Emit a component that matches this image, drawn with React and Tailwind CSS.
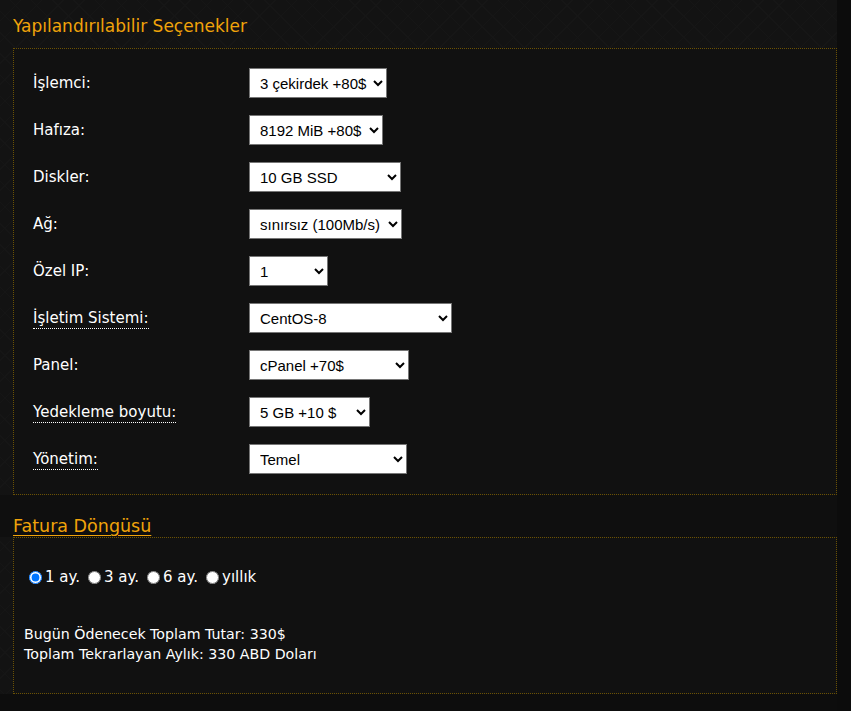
import React from "react";

const rows = [
  { label: "İşlemci:", value: "3 çekirdek +80$", w: "w-[138px]" },
  { label: "Hafıza:", value: "8192 MiB +80$", w: "w-[134px]" },
  { label: "Diskler:", value: "10 GB SSD", w: "w-[152px]" },
  { label: "Ağ:", value: "sınırsız (100Mb/s)", w: "w-[153px]" },
  { label: "Özel IP:", value: "1", w: "w-[79px]" },
  { label: "İşletim Sistemi:", value: "CentOS-8", w: "w-[203px]", abbr: true },
  { label: "Panel:", value: "cPanel +70$", w: "w-[160px]" },
  { label: "Yedekleme boyutu:", value: "5 GB +10 $", w: "w-[121px]", abbr: true },
  { label: "Yönetim:", value: "Temel", w: "w-[158px]", abbr: true },
];

const font = "font-['DejaVu_Sans',sans-serif]";

export default function App() {
  return (
    <div className="min-h-[711px] w-[851px] bg-[#0c0c0c] flex">
      <div
        className={`w-[837px] bg-[#131313] ${font} bg-[repeating-linear-gradient(45deg,#161616_0px,#161616_1px,transparent_1px,transparent_15px),repeating-linear-gradient(-45deg,#161616_0px,#161616_1px,transparent_1px,transparent_15px)]`}
      >
        <div className="pl-[13px] pt-[14px]">
          <h2 className="text-[17px] leading-[24px] text-[#f0a30a]">Yapılandırılabilir Seçenekler</h2>
          <div className="mt-[10px] h-[447px] border border-dotted border-[#6b5204] bg-[#111111] pl-[19px] pt-[19px]">
            <div className="flex flex-col gap-[17px]">
              {rows.map((r) => (
                <div key={r.label} className="flex items-center h-[30px]">
                  <div className="w-[216px] text-[15px] text-white">
                    {r.abbr ? (
                      <span className="border-b border-dotted border-white pb-[1px]">{r.label}</span>
                    ) : (
                      r.label
                    )}
                  </div>
                  <select
                    defaultValue={r.value}
                    className={`${r.w} h-[30px] bg-white text-black border border-[#767676] pl-[6px] text-[15px] font-['Liberation_Sans',Arial,sans-serif]`}
                  >
                    <option value={r.value}>{r.value}</option>
                  </select>
                </div>
              ))}
            </div>
          </div>
          <div className="h-[42px] bg-[#0f0f0f] -ml-[13px] pl-[13px] flex items-end">
            <h2 className="text-[17.5px] leading-[24px] text-[#f0a30a] underline underline-offset-[3px] mb-[-1px]">Fatura Döngüsü</h2>
          </div>
          <div className="h-[157px] border border-dotted border-[#6b5204] bg-[#111111] pl-[14px] pt-[31px] text-white">
            <div className="flex items-center text-[15px] pl-[1px] leading-[16px]">
              {["1 ay.", "3 ay.", "6 ay.", "yıllık"].map((t, i) => (
                <label key={t} className="flex items-center mr-[8px]">
                  <input type="radio" name="cycle" defaultChecked={i === 0} className="w-[13px] h-[13px] m-0 mr-[3px] accent-[#0075ff]" />
                  <span>{t}</span>
                </label>
              ))}
            </div>
            <div className="mt-[39px] -ml-[4px] text-[14.2px] leading-[20px]">
              <div>Bugün Ödenecek Toplam Tutar: 330$</div>
              <div>Toplam Tekrarlayan Aylık: 330 ABD Doları</div>
            </div>
          </div>
          <div className="h-[18px] bg-[#0d0d0d] -ml-[13px]"></div>
        </div>
      </div>
    </div>
  );
}
